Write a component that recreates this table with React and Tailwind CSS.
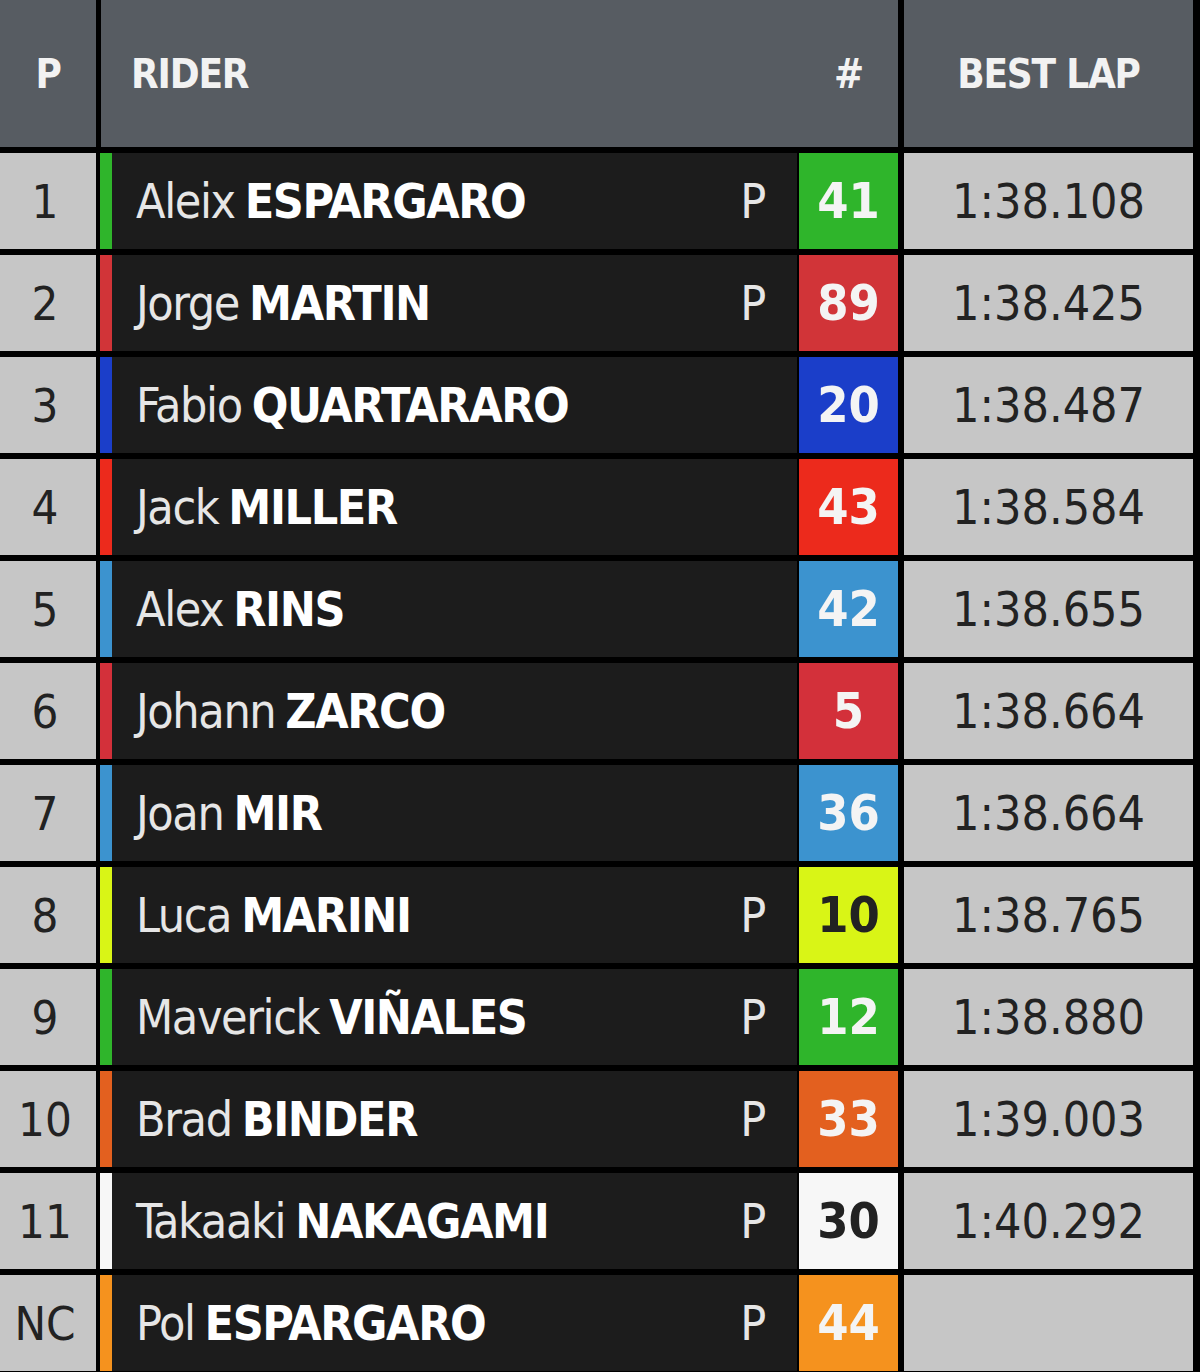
const riders = [
  { pos: "1", first: "Aleix", last: "ESPARGARO", p: true, num: "41", color: "#2fb52b", time: "1:38.108" },
  { pos: "2", first: "Jorge", last: "MARTIN", p: true, num: "89", color: "#d13438", time: "1:38.425" },
  { pos: "3", first: "Fabio", last: "QUARTARARO", p: false, num: "20", color: "#1b3ec9", time: "1:38.487" },
  { pos: "4", first: "Jack", last: "MILLER", p: false, num: "43", color: "#ec2a1c", time: "1:38.584" },
  { pos: "5", first: "Alex", last: "RINS", p: false, num: "42", color: "#3c93cf", time: "1:38.655" },
  { pos: "6", first: "Johann", last: "ZARCO", p: false, num: "5", color: "#d3303a", time: "1:38.664" },
  { pos: "7", first: "Joan", last: "MIR", p: false, num: "36", color: "#3c93cf", time: "1:38.664" },
  { pos: "8", first: "Luca", last: "MARINI", p: true, num: "10", color: "#d9f516", time: "1:38.765", dark: true },
  { pos: "9", first: "Maverick", last: "VIÑALES", p: true, num: "12", color: "#2fb52b", time: "1:38.880" },
  { pos: "10", first: "Brad", last: "BINDER", p: true, num: "33", color: "#e3601f", time: "1:39.003" },
  { pos: "11", first: "Takaaki", last: "NAKAGAMI", p: true, num: "30", color: "#f7f7f7", time: "1:40.292", dark: true },
  { pos: "NC", first: "Pol", last: "ESPARGARO", p: true, num: "44", color: "#f5921e", time: "" },
];

const font = { fontFamily: '"Liberation Sans Narrow", "DejaVu Sans Condensed", Roboto, sans-serif' };

function Row({ r }) {
  return (
    <div className="flex h-[96px] shrink-0">
      <div className="flex w-[96px] items-center justify-center bg-[#c6c6c6] pr-[6px] text-[47px] text-[#222]">
        {r.pos}
      </div>
      <div className="ml-[4px] w-[12px]" style={{ backgroundColor: r.color }} />
      <div className="flex flex-1 items-center bg-[#1c1c1c] pl-[24px] pr-[32px] text-[48px] tracking-[-1.4px] text-[#e6e6e6]">
        <span>{r.first}</span>
        <span className="ml-[10px] font-bold text-white">{r.last}</span>
        {r.p && <span className="ml-auto">P</span>}
      </div>
      <div
        className={
          "ml-[2px] flex w-[99px] items-center justify-center text-[50px] font-bold " +
          (r.dark ? "text-[#222]" : "text-[#f4f4f4]")
        }
        style={{ backgroundColor: r.color }}
      >
        {r.num}
      </div>
      <div className="ml-[6px] mr-[7px] flex w-[289px] items-center justify-center bg-[#c6c6c6] text-[48px] text-[#222]">
        {r.time}
      </div>
    </div>
  );
}

export default function App() {
  return (
    <div className="flex h-[1372px] w-[1200px] flex-col gap-[6px] overflow-hidden bg-black leading-none" style={font}>
      <div className="flex h-[147px] shrink-0 text-[40px] font-bold tracking-[-1.2px] text-[#f2f2f2]">
        <div className="flex w-[96px] items-center justify-center bg-[#575c62]">P</div>
        <div className="ml-[5px] flex flex-1 items-center bg-[#575c62] pl-[30px]">
          <span>RIDER</span>
          <span className="ml-auto w-[99px] text-center">#</span>
        </div>
        <div className="ml-[6px] mr-[7px] flex w-[289px] items-center justify-center bg-[#575c62]">
          BEST LAP
        </div>
      </div>
      {riders.map((r) => (
        <Row key={r.pos} r={r} />
      ))}
    </div>
  );
}
